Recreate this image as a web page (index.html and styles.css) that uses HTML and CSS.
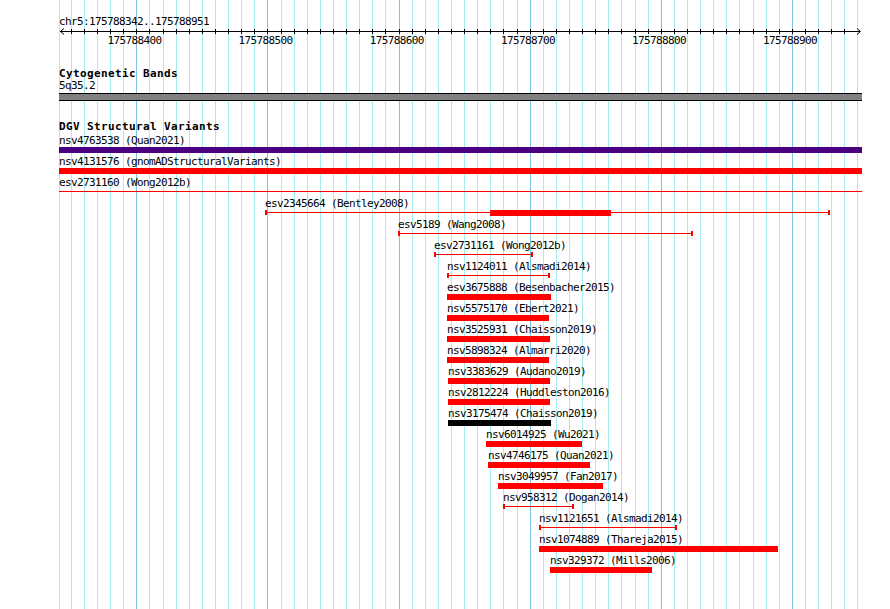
FILE: index.html
```html
<!DOCTYPE html>
<html>
<head>
<meta charset="utf-8">
<title>Genome browser</title>
<link rel="stylesheet" href="styles.css">
</head>
<body>
<div class="page">
  <svg class="grid" width="890" height="609" viewBox="0 0 890 609" shape-rendering="crispEdges">
    <g class="minor">
      <rect x="59" width="1" height="609"/><rect x="71" width="1" height="609"/><rect x="84" width="1" height="609"/><rect x="97" width="1" height="609"/><rect x="110" width="1" height="609"/><rect x="123" width="1" height="609"/>
      <rect x="149" width="1" height="609"/><rect x="163" width="1" height="609"/><rect x="176" width="1" height="609"/><rect x="189" width="1" height="609"/><rect x="202" width="1" height="609"/><rect x="215" width="1" height="609"/><rect x="228" width="1" height="609"/><rect x="241" width="1" height="609"/><rect x="254" width="1" height="609"/>
      <rect x="281" width="1" height="609"/><rect x="294" width="1" height="609"/><rect x="307" width="1" height="609"/><rect x="320" width="1" height="609"/><rect x="333" width="1" height="609"/><rect x="346" width="1" height="609"/><rect x="359" width="1" height="609"/><rect x="372" width="1" height="609"/><rect x="385" width="1" height="609"/>
      <rect x="412" width="1" height="609"/><rect x="425" width="1" height="609"/><rect x="438" width="1" height="609"/><rect x="451" width="1" height="609"/><rect x="464" width="1" height="609"/><rect x="477" width="1" height="609"/><rect x="490" width="1" height="609"/><rect x="503" width="1" height="609"/><rect x="517" width="1" height="609"/>
      <rect x="543" width="1" height="609"/><rect x="556" width="1" height="609"/><rect x="569" width="1" height="609"/><rect x="582" width="1" height="609"/><rect x="595" width="1" height="609"/><rect x="608" width="1" height="609"/><rect x="621" width="1" height="609"/><rect x="635" width="1" height="609"/><rect x="648" width="1" height="609"/>
      <rect x="674" width="1" height="609"/><rect x="687" width="1" height="609"/><rect x="700" width="1" height="609"/><rect x="713" width="1" height="609"/><rect x="726" width="1" height="609"/><rect x="739" width="1" height="609"/><rect x="753" width="1" height="609"/><rect x="766" width="1" height="609"/><rect x="779" width="1" height="609"/>
      <rect x="805" width="1" height="609"/><rect x="818" width="1" height="609"/><rect x="831" width="1" height="609"/><rect x="844" width="1" height="609"/><rect x="857" width="1" height="609"/>
    </g>
    <g class="major">
      <rect x="136" width="1" height="609"/><rect x="267" width="1" height="609"/><rect x="399" width="1" height="609"/><rect x="530" width="1" height="609"/><rect x="661" width="1" height="609"/><rect x="792" width="1" height="609"/>
    </g>
  </svg>

  <div class="view">
    <div class="ruler">
      <div class="locus">chr5:175788342..175788951</div>
      <svg class="axis" width="803" height="18" viewBox="0 0 803 18">
        <path class="axis-line" shape-rendering="crispEdges" d="M1 3.5H801 M12.5 1V6 M25.5 1V6 M38.5 1V6 M51.5 1V6 M64.5 1V6 M77.5 1V6 M90.5 1V6 M104.5 1V6 M117.5 1V6 M130.5 1V6 M143.5 1V6 M156.5 1V6 M169.5 1V6 M182.5 1V6 M195.5 1V6 M208.5 1V6 M222.5 1V6 M235.5 1V6 M248.5 1V6 M261.5 1V6 M274.5 1V6 M287.5 1V6 M300.5 1V6 M313.5 1V6 M326.5 1V6 M340.5 1V6 M353.5 1V6 M366.5 1V6 M379.5 1V6 M392.5 1V6 M405.5 1V6 M418.5 1V6 M431.5 1V6 M444.5 1V6 M458.5 1V6 M471.5 1V6 M484.5 1V6 M497.5 1V6 M510.5 1V6 M523.5 1V6 M536.5 1V6 M549.5 1V6 M562.5 1V6 M576.5 1V6 M589.5 1V6 M602.5 1V6 M615.5 1V6 M628.5 1V6 M641.5 1V6 M654.5 1V6 M667.5 1V6 M680.5 1V6 M694.5 1V6 M707.5 1V6 M720.5 1V6 M733.5 1V6 M746.5 1V6 M759.5 1V6 M772.5 1V6 M785.5 1V6"/>
        <polyline class="arrow" points="5,0.5 1.5,3.5 5,6.5"/>
        <polyline class="arrow" points="798,0.5 801.5,3.5 798,6.5"/>
        <text class="tick-label" x="48.5" y="16">175788400</text>
        <text class="tick-label" x="179.6" y="16">175788500</text>
        <text class="tick-label" x="310.7" y="16">175788600</text>
        <text class="tick-label" x="441.9" y="16">175788700</text>
        <text class="tick-label" x="573" y="16">175788800</text>
        <text class="tick-label" x="704.1" y="16">175788900</text>
      </svg>
    </div>

    <div class="track cyto">
      <div class="title">Cytogenetic Bands</div>
      <div class="band-label">5q35.2</div>
      <div class="band"></div>
    </div>

    <div class="track dgv">
      <div class="title">DGV Structural Variants</div>
      <div class="rows">
        <div class="row"><div class="feat full"><div class="lbl">nsv4763538 (Quan2021)</div><div class="bar purple"></div></div></div>
        <div class="row"><div class="feat full"><div class="lbl">nsv4131576 (gnomADStructuralVariants)</div><div class="bar"></div></div></div>
        <div class="row"><div class="feat full"><div class="lbl">esv2731160 (Wong2012b)</div><div class="line"></div></div></div>
        <div class="row"><div class="feat" style="margin-left:206px;width:565px"><div class="lbl">esv2345664 (Bentley2008)</div><div class="span"><div class="thick" style="margin-left:223px;width:121px"></div></div></div></div>
        <div class="row"><div class="feat" style="margin-left:339px;width:295px"><div class="lbl">esv5189 (Wang2008)</div><div class="span"></div></div></div>
        <div class="row"><div class="feat" style="margin-left:375px;width:99px"><div class="lbl">esv2731161 (Wong2012b)</div><div class="span"></div></div></div>
        <div class="row"><div class="feat" style="margin-left:388px;width:103px"><div class="lbl">nsv1124011 (Alsmadi2014)</div><div class="span"></div></div></div>
        <div class="row"><div class="feat" style="margin-left:388px;width:104px"><div class="lbl">esv3675888 (Besenbacher2015)</div><div class="bar"></div></div></div>
        <div class="row"><div class="feat" style="margin-left:388px;width:102px"><div class="lbl">nsv5575170 (Ebert2021)</div><div class="bar"></div></div></div>
        <div class="row"><div class="feat" style="margin-left:388px;width:103px"><div class="lbl">nsv3525931 (Chaisson2019)</div><div class="bar"></div></div></div>
        <div class="row"><div class="feat" style="margin-left:388px;width:102px"><div class="lbl">nsv5898324 (Almarri2020)</div><div class="bar"></div></div></div>
        <div class="row"><div class="feat" style="margin-left:389px;width:102px"><div class="lbl">nsv3383629 (Audano2019)</div><div class="bar"></div></div></div>
        <div class="row"><div class="feat" style="margin-left:389px;width:102px"><div class="lbl">nsv2812224 (Huddleston2016)</div><div class="bar"></div></div></div>
        <div class="row"><div class="feat" style="margin-left:389px;width:103px"><div class="lbl">nsv3175474 (Chaisson2019)</div><div class="bar black"></div></div></div>
        <div class="row"><div class="feat" style="margin-left:427px;width:96px"><div class="lbl">nsv6014925 (Wu2021)</div><div class="bar"></div></div></div>
        <div class="row"><div class="feat" style="margin-left:429px;width:102px"><div class="lbl">nsv4746175 (Quan2021)</div><div class="bar"></div></div></div>
        <div class="row"><div class="feat" style="margin-left:439px;width:105px"><div class="lbl">nsv3049957 (Fan2017)</div><div class="bar"></div></div></div>
        <div class="row"><div class="feat" style="margin-left:444px;width:71px"><div class="lbl">nsv958312 (Dogan2014)</div><div class="span"></div></div></div>
        <div class="row"><div class="feat" style="margin-left:480px;width:138px"><div class="lbl">nsv1121651 (Alsmadi2014)</div><div class="span"></div></div></div>
        <div class="row"><div class="feat" style="margin-left:480px;width:239px"><div class="lbl">nsv1074889 (Thareja2015)</div><div class="bar"></div></div></div>
        <div class="row"><div class="feat" style="margin-left:491px;width:102px"><div class="lbl">nsv329372 (Mills2006)</div><div class="bar"></div></div></div>
      </div>
    </div>
  </div>
</div>
</body>
</html>
```

FILE: styles.css
```css
html, body {
  margin: 0;
  padding: 0;
  background: #ffffff;
}

.page {
  position: relative;
  width: 890px;
  height: 609px;
  overflow: hidden;
  background: #ffffff;
}

.grid {
  position: absolute;
  left: 0;
  top: 0;
  display: block;
}

.grid .minor rect {
  fill: #a6ecf0;
}

.grid .major rect {
  fill: #7cc4e6;
}

.view {
  position: relative;
  margin-left: 59px;
  width: 803px;
  font-family: "DejaVu Sans Mono", "Liberation Mono", monospace;
  font-size: 11px;
  letter-spacing: -0.62px;
  line-height: 12px;
  color: #000000;
}

/* ruler */
.ruler {
  padding-top: 16px;
}

.locus {
  line-height: 12px;
  white-space: nowrap;
}

.axis {
  display: block;
  overflow: visible;
}

.axis-line {
  stroke: #000000;
  stroke-width: 1;
  fill: none;
}

.arrow {
  stroke: #000000;
  stroke-width: 1;
  fill: none;
}

.tick-label {
  fill: #000000;
  font-family: "DejaVu Sans Mono", "Liberation Mono", monospace;
  font-size: 11px;
  letter-spacing: -0.62px;
}

/* tracks */
.title {
  font-weight: bold;
  letter-spacing: 0.38px;
  line-height: 12px;
  white-space: nowrap;
}

.cyto {
  margin-top: 22px;
}

.band-label {
  line-height: 12px;
}

.band {
  margin-top: 1px;
  height: 6px;
  border-top: 1px solid #000000;
  border-bottom: 1px solid #000000;
  background: #808080;
}

.dgv {
  margin-top: 20px;
}

.rows {
  margin-top: 3px;
}

.row {
  height: 21px;
}

.feat {
  box-sizing: border-box;
}

.feat.full {
  width: 803px;
}

.lbl {
  line-height: 9px;
  height: 9px;
  margin-bottom: 2px;
  white-space: nowrap;
}

.bar {
  height: 6px;
  background: #ff0000;
}

.bar.purple {
  background: #4b0082;
}

.bar.black {
  background: #000000;
}

.line {
  height: 5px;
  background: linear-gradient(#ff0000, #ff0000) left 2px / 100% 1px no-repeat;
}

.span {
  box-sizing: border-box;
  display: flex;
  align-items: flex-start;
  height: 5px;
  border-left: 2px solid #ff0000;
  border-right: 2px solid #ff0000;
  background: linear-gradient(#ff0000, #ff0000) left 2px / 100% 1px no-repeat;
}

.thick {
  flex: none;
  height: 6px;
  background: #ff0000;
}
```
